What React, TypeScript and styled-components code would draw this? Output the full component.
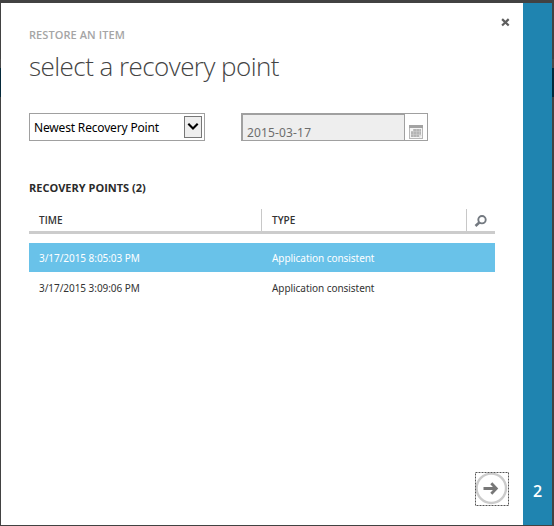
import React from "react";
import styled, { createGlobalStyle } from "styled-components";

const GlobalStyle = createGlobalStyle`
  * { box-sizing: border-box; }
  body { margin: 0; overflow: hidden; font-family: "Noto Sans", "Open Sans", sans-serif; }
`;

const Backdrop = styled.div`
  display: flex;
  width: 554px;
  height: 526px;
  padding: 3px 2px 1px 1px;
  background: linear-gradient(#424242 0 59px, #4a4a4a 59px 68px, #04293a 68px 97px, #424242 97px);
`;

const Panel = styled.main`
  display: flex;
  flex-direction: column;
  width: 522px;
  padding: 0 28px;
  background: #fff;
`;

const StepRail = styled.aside`
  display: flex;
  flex: 1;
  align-items: flex-end;
  justify-content: center;
  padding-bottom: 23px;
  background: #1f84b0;
  color: #fff;
  font: 600 16px/22px "Open Sans", sans-serif;
`;

const Header = styled.header`
  display: flex;
  justify-content: space-between;
  height: 110px;
`;

const Eyebrow = styled.div`
  margin-top: 24px;
  height: 16px;
  color: #a5a5a5;
  font: 600 11px/16px "Open Sans", sans-serif;
  letter-spacing: 0.08px;
  white-space: nowrap;
`;

const Title = styled.h1`
  margin: 5px 0 0;
  color: #444;
  font: 300 26px/36px "Open Sans", sans-serif;
  letter-spacing: -0.55px;
  white-space: nowrap;
`;

const CloseButton = styled.button`
  display: flex;
  width: 9px;
  height: 9px;
  margin: 15px -15px 0 0;
  padding: 0;
  border: 0;
  background: none;
`;

const Filters = styled.div`
  display: flex;
  gap: 36px;
  height: 28px;
`;

const SelectBox = styled.div`
  display: flex;
  align-items: center;
  justify-content: space-between;
  width: 176px;
  padding: 0 2px 0 4px;
  border: 1px solid #a0a0a0;
  color: #000;
  font-size: 12px;
  letter-spacing: -0.17px;
  white-space: nowrap;
`;

const SelectArrow = styled.span`
  display: flex;
  align-items: center;
  justify-content: center;
  width: 18px;
  height: 22px;
  border: 1px solid #777;
  background: #eee;
`;

const DateBox = styled.div`
  display: flex;
  width: 187px;
  border: 1px solid #a0a0a0;
`;

const DateValue = styled.div`
  width: 163px;
  padding: 9px 0 0 4px;
  border: solid #a0a0a0;
  border-width: 1px 1px 0 1px;
  background: #eee;
  color: #6d6d6d;
  font-size: 12px;
  line-height: 17px;
  letter-spacing: 0.15px;
`;

const CalendarButton = styled.div`
  display: flex;
  flex: 1;
  align-items: flex-end;
  justify-content: center;
  padding-bottom: 1px;
`;

const SectionTitle = styled.h2`
  margin: 39px 0 0;
  height: 29px;
  color: #2b2b2b;
  font: 700 11px/16px "Open Sans", sans-serif;
  letter-spacing: 0;
`;

const Table = styled.div`
  width: 466px;
  color: #333;
  font-size: 10px;
`;

const columns = "232px 205px 29px";

const HeadRow = styled.div`
  display: grid;
  grid-template-columns: ${columns};
  height: 25px;
  margin-bottom: 9px;
  border-bottom: 3px solid #ccc;
`;

const HeadCell = styled.div`
  display: flex;
  align-items: center;
  padding-left: 10px;
  font: 600 10px/14px "Open Sans", sans-serif;

  & + & { border-left: 1px solid #c8c8c8; }
`;

const SearchCell = styled(HeadCell)`
  padding-left: 7px;
  padding-top: 2px;
`;

const Row = styled.div<{ $selected?: boolean }>`
  display: grid;
  grid-template-columns: ${columns};
  align-items: center;
  height: 29px;
  margin-bottom: 1px;
  background: ${(p) => (p.$selected ? "#69c2e9" : "transparent")};
  color: ${(p) => (p.$selected ? "#fff" : "#333")};
`;

const Cell = styled.div`
  padding-left: 10px;
  line-height: 14px;
  letter-spacing: -0.05px;
  white-space: nowrap;

  & + & { padding-left: 11px; }
`;

const Footer = styled.footer`
  display: flex;
  justify-content: flex-end;
  margin: auto -14px 19px 0;
`;

const NextButton = styled.button`
  display: flex;
  width: 34px;
  height: 34px;
  padding: 0;
  border: 0;
  background: none;
`;

const points = [
  { time: "3/17/2015 8:05:03 PM", type: "Application consistent", selected: true },
  { time: "3/17/2015 3:09:06 PM", type: "Application consistent", selected: false },
];

const CloseIcon = () => (
  <svg width="9" height="9" viewBox="0 0 9 9">
    <path d="M1.1 1.1l6.6 6.4M7.7 1.1L1.1 7.5" stroke="#5e5e5e" strokeWidth="2.2" />
  </svg>
);

const ChevronIcon = () => (
  <svg width="12" height="8" viewBox="0 0 12 8">
    <path d="M1.3 .8L6 5.5 10.7 .8" fill="none" stroke="#000" strokeWidth="2.1" />
  </svg>
);

const CalendarIcon = () => (
  <svg width="14" height="14" viewBox="0 0 14 14">
    <path d="M0 0h14v14H0z" fill="#b8b8b8" />
    <path d="M0 0h14v3H0z" fill="#a3a3a3" />
    <path d="M1 3h12v10H1z" fill="#f4f4f4" />
    <path d="M4 4h8v6h-2v2H2V6h2z" fill="#b4b4b4" />
    <path d="M2 6.5h10M2 9.5h10M4.5 4v8M7.5 4v8M10.5 4v8" stroke="#d0d0d0" strokeWidth=".5" />
    <path d="M10 13v-3h3z" fill="#ddd" />
  </svg>
);

const SearchIcon = () => (
  <svg width="13" height="12" viewBox="0 0 13 12">
    <circle cx="8" cy="4.7" r="3.7" fill="#fff" stroke="#737980" strokeWidth="1.9" />
    <path d="M5.3 7.5L1.5 11" stroke="#737980" strokeWidth="2.5" />
  </svg>
);

const NextIcon = () => (
  <svg width="34" height="34" viewBox="0 0 34 34">
    <circle cx="16.3" cy="16.3" r="14.7" fill="#fff" stroke="#cbcbcb" strokeWidth="2.4" />
    <path d="M8.5 16.5h12.5M16.3 11.3l5 5.2-5 5.2" fill="none" stroke="#777" strokeWidth="2.8" />
    <rect x=".5" y=".5" width="33" height="33" fill="none" stroke="#555" strokeDasharray="2 1" />
  </svg>
);

export default function App() {
  return (
    <>
      <GlobalStyle />
      <Backdrop>
        <Panel>
          <Header>
            <div>
              <Eyebrow>RESTORE AN ITEM</Eyebrow>
              <Title>select a recovery point</Title>
            </div>
            <CloseButton aria-label="Close"><CloseIcon /></CloseButton>
          </Header>
          <Filters>
            <SelectBox>
              Newest Recovery Point
              <SelectArrow><ChevronIcon /></SelectArrow>
            </SelectBox>
            <DateBox>
              <DateValue>2015-03-17</DateValue>
              <CalendarButton><CalendarIcon /></CalendarButton>
            </DateBox>
          </Filters>
          <SectionTitle>RECOVERY POINTS (2)</SectionTitle>
          <Table>
            <HeadRow>
              <HeadCell>TIME</HeadCell>
              <HeadCell>TYPE</HeadCell>
              <SearchCell><SearchIcon /></SearchCell>
            </HeadRow>
            {points.map((p) => (
              <Row key={p.time} $selected={p.selected}>
                <Cell>{p.time}</Cell>
                <Cell>{p.type}</Cell>
              </Row>
            ))}
          </Table>
          <Footer>
            <NextButton aria-label="Next"><NextIcon /></NextButton>
          </Footer>
        </Panel>
        <StepRail>2</StepRail>
      </Backdrop>
    </>
  );
}
